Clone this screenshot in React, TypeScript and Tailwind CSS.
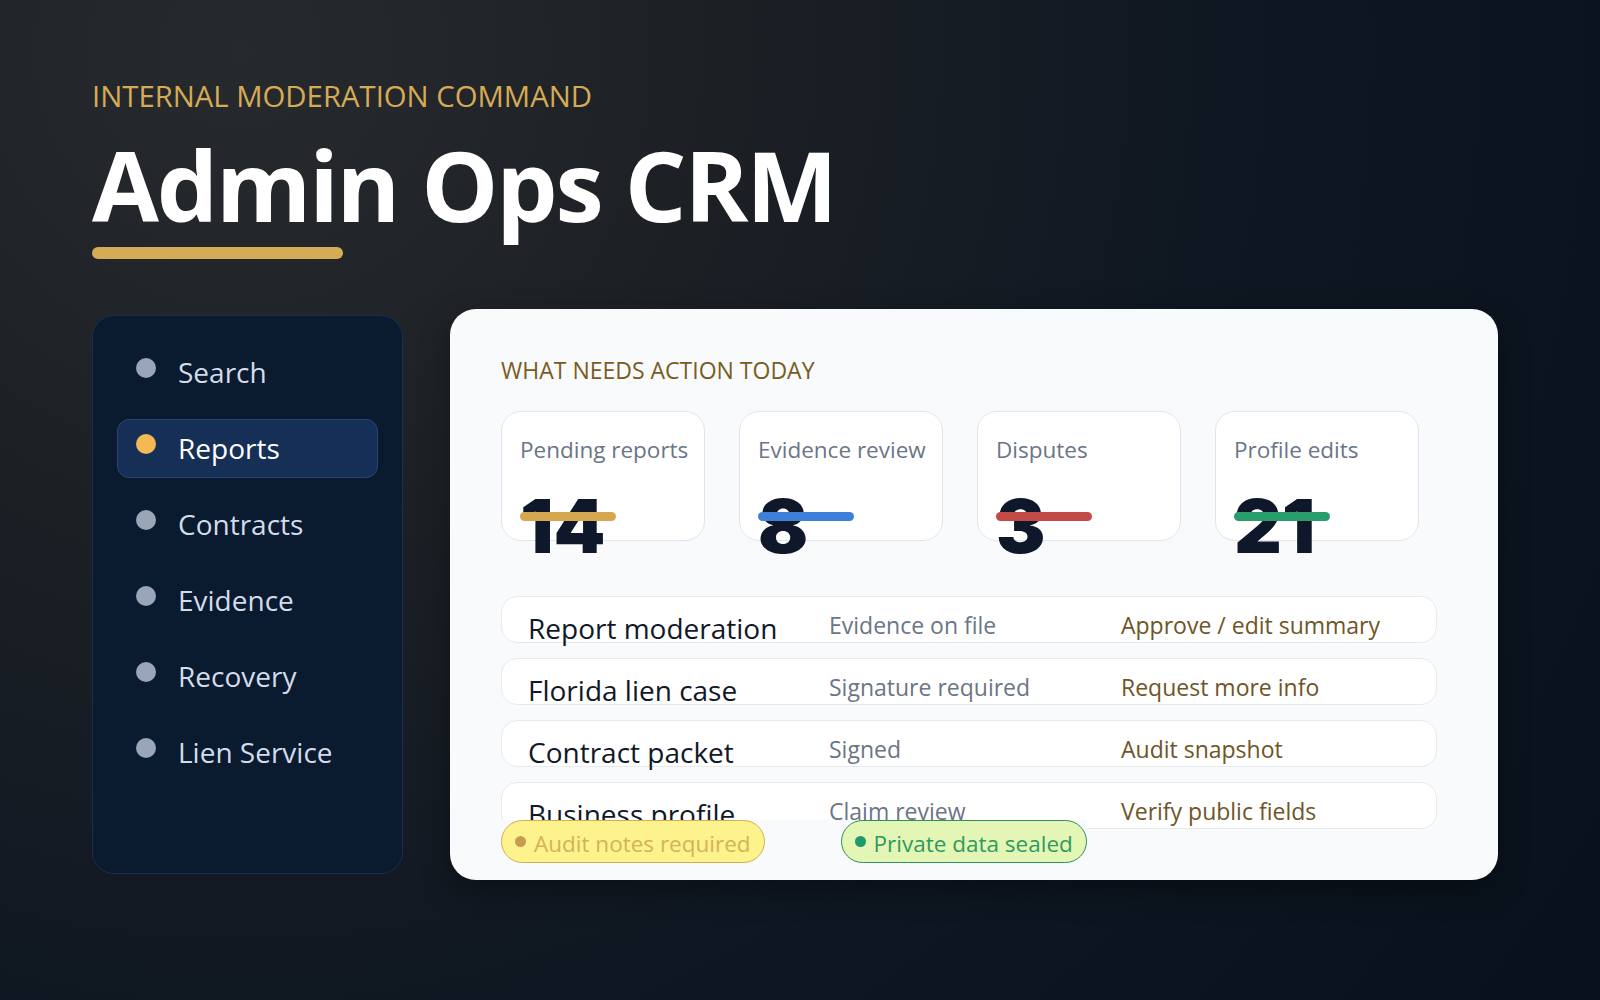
const navItems = ['Search', 'Reports', 'Contracts', 'Evidence', 'Recovery', 'Lien Service'];

const stats = [
  { label: 'Pending reports', value: '14', bar: 'bg-[#d5a84f]' },
  { label: 'Evidence review', value: '8', bar: 'bg-[#3d7fd9]' },
  { label: 'Disputes', value: '3', bar: 'bg-[#c24b48]' },
  { label: 'Profile edits', value: '21', bar: 'bg-[#2a9d6c]' },
];

const queue = [
  { item: 'Report moderation', status: 'Evidence on file', action: 'Approve / edit summary' },
  { item: 'Florida lien case', status: 'Signature required', action: 'Request more info' },
  { item: 'Contract packet', status: 'Signed', action: 'Audit snapshot' },
  { item: 'Business profile', status: 'Claim review', action: 'Verify public fields' },
];

function Sidebar() {
  return (
    <nav className="h-[559px] w-[311px] shrink-0 rounded-[22px] border border-[#1b2e4b] bg-[#0a1a2f] px-[24px] pt-[27px]">
      <ul className="flex flex-col gap-[17px]">
        {navItems.map((name) => {
          const active = name === 'Reports';
          return (
            <li
              key={name}
              className={
                active
                  ? 'flex h-[59px] items-center rounded-[12px] border border-[#2a4670] bg-[#152f56] pl-[18px]'
                  : 'flex h-[59px] items-center rounded-[12px] border border-transparent pl-[18px]'
              }
            >
              <span
                className={
                  active
                    ? 'mb-[10px] mr-[22px] h-[20px] w-[20px] rounded-full bg-[#f2b955]'
                    : 'mb-[10px] mr-[22px] h-[20px] w-[20px] rounded-full bg-[#9aa6b8]'
                }
              />
              <span className={active ? 'text-[28px] leading-[1.2] text-white' : 'text-[28px] leading-[1.2] text-[#d3dcea]'}>
                {name}
              </span>
            </li>
          );
        })}
      </ul>
    </nav>
  );
}

function StatCard({ label, value, bar }: { label: string; value: string; bar: string }) {
  return (
    <div className="h-[130px] w-[204px] rounded-[20px] border border-[#e1e6ee] bg-white pl-[18px] pt-[24px]">
      <p className="text-[22.5px] leading-[1.2] text-[#6b7587]">{label}</p>
      <div className="relative mt-[26px]">
        <span className="font-['Inter',sans-serif] text-[74px] font-black leading-none text-[#0f172a]">{value}</span>
        <span className={`absolute left-0 top-[23px] h-[9px] w-[96px] rounded-full ${bar}`} />
      </div>
    </div>
  );
}

export default function App() {
  return (
    <div className="h-[1000px] w-full overflow-hidden bg-[radial-gradient(circle_at_15%_5%,#272a2d_0%,#1c2025_30%,#0f1722_60%,#08111b_100%)] pl-[92px] pt-[79px] font-['Open_Sans','Noto_Sans',sans-serif]">
      <p className="text-[29.3px] leading-[1.2] text-[#d6ab55]">INTERNAL MODERATION COMMAND</p>
      <h1 className="mt-[22px] text-[97px] font-bold leading-none tracking-[-0.022em] text-white">Admin Ops CRM</h1>
      <div className="mt-[14px] h-[12px] w-[251px] rounded-full bg-[#d6ab55]" />

      <div className="mt-[50px] flex items-center gap-[47px]">
        <Sidebar />

        <section className="h-[571px] w-[1048px] shrink-0 rounded-[26px] bg-[#f8fafc] pl-[51px] pt-[48px] shadow-[0_10px_30px_rgba(0,0,0,0.35)]">
          <h2 className="text-[23px] leading-[1.2] text-[#7a5c22]">WHAT NEEDS ACTION TODAY</h2>

          <div className="mt-[26px] flex gap-[34px]">
            {stats.map((s) => (
              <StatCard key={s.label} {...s} />
            ))}
          </div>

          <div className="mt-[55px] flex w-[936px] flex-col gap-[15px]">
            {queue.map((row) => (
              <div
                key={row.item}
                className="grid h-[47px] grid-cols-[301px_292px_1fr] items-start rounded-[16px] border border-[#e6eaf0] bg-white pl-[26px] pt-[15px]"
              >
                <span className="text-[28px] leading-[1.2] text-[#111827]">{row.item}</span>
                <span className="text-[23px] leading-[1.2] text-[#6b7587]">{row.status}</span>
                <span className="text-[23px] leading-[1.2] text-[#6e5526]">{row.action}</span>
              </div>
            ))}
          </div>

          <div className="relative z-10 -mt-[9px] inline-flex gap-[76px] bg-[#f8fafc]">
            <span className="flex h-[43px] items-center rounded-full border-[1.5px] border-[#d2ae52] bg-[#fdf38d] pl-[13px] pr-[13px]">
              <span className="mr-[8px] h-[11px] w-[11px] rounded-full bg-[#c99b52]" />
              <span className="mt-[4px] text-[22.5px] leading-[1.2] text-[#d5b257]">Audit notes required</span>
            </span>
            <span className="flex h-[43px] items-center rounded-full border-[1.5px] border-[#2f8f5e] bg-[#e4f6b6] pl-[13px] pr-[13px]">
              <span className="mr-[8px] h-[11px] w-[11px] rounded-full bg-[#1f9a6a]" />
              <span className="mt-[4px] text-[22.5px] leading-[1.2] text-[#2f9a60]">Private data sealed</span>
            </span>
          </div>
        </section>
      </div>
    </div>
  );
}
